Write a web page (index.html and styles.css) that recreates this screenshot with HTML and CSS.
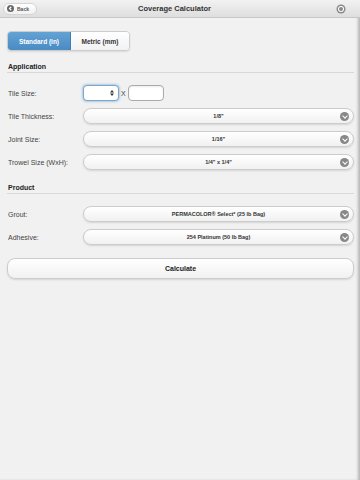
FILE: index.html
```html
<!doctype html>
<html>
<head>
<meta charset="utf-8">
<title>Coverage Calculator</title>
<link rel="stylesheet" href="styles.css">
</head>
<body>
<div class="page">
	<div class="bar">
		<a class="back" href="#"><span class="ico"><svg width="7" height="7" viewBox="0 0 14 14"><circle cx="7" cy="7" r="7" fill="#666"/><path d="M8.5 3.5 L5 7 L8.5 10.5" stroke="#fff" stroke-width="2.4" fill="none"/></svg></span>Back</a>
		<h1>Coverage Calculator</h1>
		<a class="opt" href="#"><svg width="10" height="10" viewBox="0 0 20 20"><circle cx="10" cy="10" r="9" fill="#8a8a8a"/><circle cx="10" cy="10" r="6" fill="#fff"/><circle cx="10" cy="10" r="4" fill="#8a8a8a"/></svg></a>
	</div>

	<div class="content">
		<div class="seg">
			<a class="on" href="#">Standard (in)</a>
			<a href="#">Metric (mm)</a>
		</div>

		<h3>Application</h3>
		<div class="row first">
			<label>Tile Size:</label>
			<div class="size">
				<span class="num focus"><svg width="4" height="6" viewBox="0 0 8 12"><path d="M4 0 L8 5 H0 Z M4 12 L8 7 H0 Z" fill="#333"/></svg></span>
				<span class="x">X</span>
				<span class="num"></span>
			</div>
		</div>
		<div class="row">
			<label>Tile Thickness:</label>
			<div class="sel">1/8"<i></i></div>
		</div>
		<div class="row">
			<label>Joint Size:</label>
			<div class="sel">1/16"<i></i></div>
		</div>
		<div class="row">
			<label>Trowel Size (WxH):</label>
			<div class="sel">1/4" x 1/4"<i></i></div>
		</div>

		<h3 class="prod">Product</h3>
		<div class="row first2">
			<label>Grout:</label>
			<div class="sel">PERMACOLOR® Select* (25 lb Bag)<i></i></div>
		</div>
		<div class="row">
			<label>Adhesive:</label>
			<div class="sel">254 Platinum (50 lb Bag)<i></i></div>
		</div>

		<a class="btn" href="#">Calculate</a>
	</div>
</div>
</body>
</html>
```

FILE: styles.css
```css
*{margin:0;padding:0;box-sizing:border-box;}
body{background:#f1f1f1;font-family:"Liberation Sans",Arial,sans-serif;color:#333;}
a{text-decoration:none;color:#333;}
.page{width:360px;height:480px;background:#f1f1f1;box-shadow:inset -3px 0 3px -1px rgba(0,0,0,.25);}

.bar{display:grid;grid-template-columns:1fr auto 1fr;align-items:center;height:18px;padding:0 14px 0 3px;background:linear-gradient(#f2f2f2,#dedede);border-bottom:1px solid #c8c8c8;}
.bar h1{font-size:7.5px;font-weight:bold;color:#333;}
.back{justify-self:start;display:flex;align-items:center;gap:3px;height:12px;padding:0 7px 0 3px;border-radius:7px;background:linear-gradient(#fff,#f1f1f1);border:1px solid #d4d4d4;font-size:5px;font-weight:bold;color:#555;}
.back .ico{display:flex;}
.opt{justify-self:end;display:flex;}

.content{padding:13px 6px 0 7px;}

.seg{display:flex;width:123px;height:20px;border-radius:4px;border:1px solid #ccc;overflow:hidden;box-shadow:0 1px 2px rgba(0,0,0,.1);}
.seg a{display:flex;align-items:center;justify-content:center;font-size:6.5px;font-weight:bold;}
.seg a.on{width:63px;background:linear-gradient(#63a2d4,#4a8bc4);color:#fff;border-right:1px solid #3f7fb5;}
.seg a:not(.on){flex:1;background:linear-gradient(#fff,#f2f2f2);}

h3{margin-top:12px;padding:0 1px 2px;font-size:7px;font-weight:bold;color:#222;border-bottom:1px solid #d8d8d8;}
h3.prod{margin-top:14px;}

.row{display:flex;align-items:center;margin-top:7px;}
.row.first{margin-top:12px;}
.row.first2{margin-top:12px;}
.row label{width:76px;padding-left:1px;font-size:7px;color:#444;}
.size{display:flex;align-items:center;gap:2px;}
.num{display:flex;align-items:center;justify-content:flex-end;padding-right:4px;width:36px;height:16px;border:1px solid #aaa;border-radius:4px;background:#fff;box-shadow:inset 0 1px 2px rgba(0,0,0,.08);}
.num.focus{border-color:#7aa7cc;box-shadow:0 0 3px #6a9cd0;}
.x{font-size:7px;color:#444;}

.sel{position:relative;flex:1;height:16px;display:flex;align-items:center;justify-content:center;border:1px solid #ccc;border-radius:8px;background:linear-gradient(#fff,#f1f1f1);box-shadow:0 1px 2px rgba(0,0,0,.12);font-size:5.5px;font-weight:bold;color:#333;}
.sel i{position:absolute;right:4px;top:3px;width:9px;height:9px;border-radius:50%;background:#888;}
.sel i::after{content:"";position:absolute;left:2.5px;top:2px;width:3px;height:3px;border-right:1.3px solid #fff;border-bottom:1.3px solid #fff;transform:rotate(45deg);}

.btn{display:flex;align-items:center;justify-content:center;margin-top:13px;height:21px;border:1px solid #ccc;border-radius:8px;background:linear-gradient(#fff,#f1f1f1);box-shadow:0 1px 2px rgba(0,0,0,.12);font-size:7px;font-weight:bold;color:#222;}
```
